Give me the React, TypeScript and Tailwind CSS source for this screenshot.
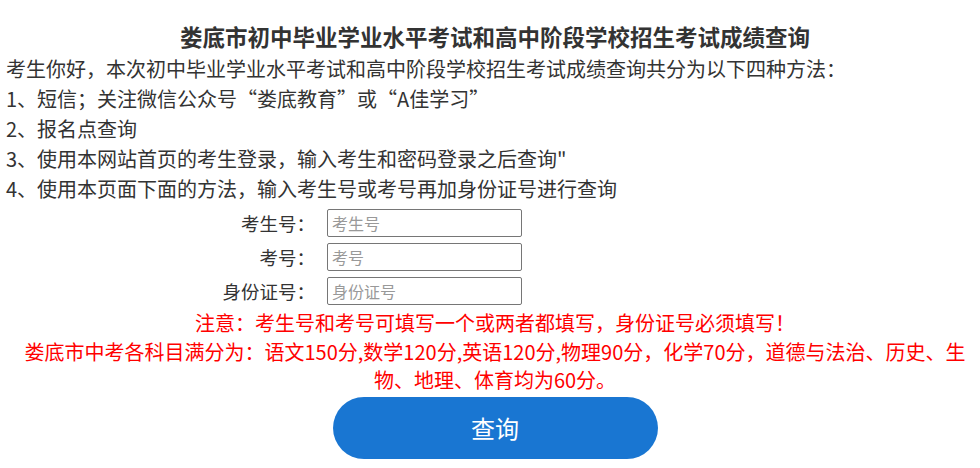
import React, { useState } from "react";

const font = "font-['Microsoft_YaHei','Noto_Sans_CJK_SC',sans-serif]";

const methods = [
    "考生你好，本次初中毕业学业水平考试和高中阶段学校招生考试成绩查询共分为以下四种方法：",
    "1、短信；关注微信公众号“娄底教育”或“A佳学习”",
    "2、报名点查询",
    "3、使用本网站首页的考生登录，输入考生和密码登录之后查询\"",
    "4、使用本页面下面的方法，输入考生号或考号再加身份证号进行查询",
];

const fields = [
    { label: "考生号：", key: "ksh" },
    { label: "考号：", key: "kh" },
    { label: "身份证号：", key: "sfzh" },
];

export default function App() {
    const [form, setForm] = useState<Record<string, string>>({ ksh: "", kh: "", sfzh: "" });

    return (
        <div className={`${font} bg-white text-[#333] w-[980px] h-[468px] overflow-hidden`}>
            <div className="pl-[10px]">
                <h1 className="pt-[20px] pb-[2px] text-center text-[22.5px] leading-[32px] font-bold text-[#333]">
                    娄底市初中毕业学业水平考试和高中阶段学校招生考试成绩查询
                </h1>
            </div>

            <div className="pl-[6px] text-[20px] leading-[30px]">
                {methods.map((m) => (
                    <p key={m}>{m}</p>
                ))}
            </div>

            <div className="pl-[203px] pt-[5px] flex flex-col gap-[6px]">
                {fields.map((f) => (
                    <div key={f.key} className="flex items-center">
                        <label className="w-[112px] text-right text-[18.5px] leading-[28px] text-[#333]">{f.label}</label>
                        <input
                            value={form[f.key]}
                            onChange={(e) => setForm((prev) => ({ ...prev, [f.key]: e.target.value }))}
                            placeholder={f.label.replace("：", "")}
                            className="ml-[12px] w-[195px] h-[28px] border border-[#767676] rounded-[2px] px-[4px] text-[16px] placeholder:text-[#999] outline-none"
                        />
                    </div>
                ))}
            </div>

            <div className="pl-[10px] text-center text-[20px] text-[#ff0000]">
                <p className="mt-[3px] leading-[30px]">注意：考生号和考号可填写一个或两者都填写，身份证号必须填写！</p>
                <p className="mx-auto max-w-[960px] leading-[28px]">
                    娄底市中考各科目满分为：语文150分,数学120分,英语120分,物理90分，化学70分，道德与法治、历史、生物、地理、体育均为60分。
                </p>
                <div className="flex justify-center pt-[3px]">
                    <button className="w-[325px] h-[62px] rounded-full bg-[#1976d2] text-white text-[24px]">查询</button>
                </div>
            </div>
        </div>
    );
}
